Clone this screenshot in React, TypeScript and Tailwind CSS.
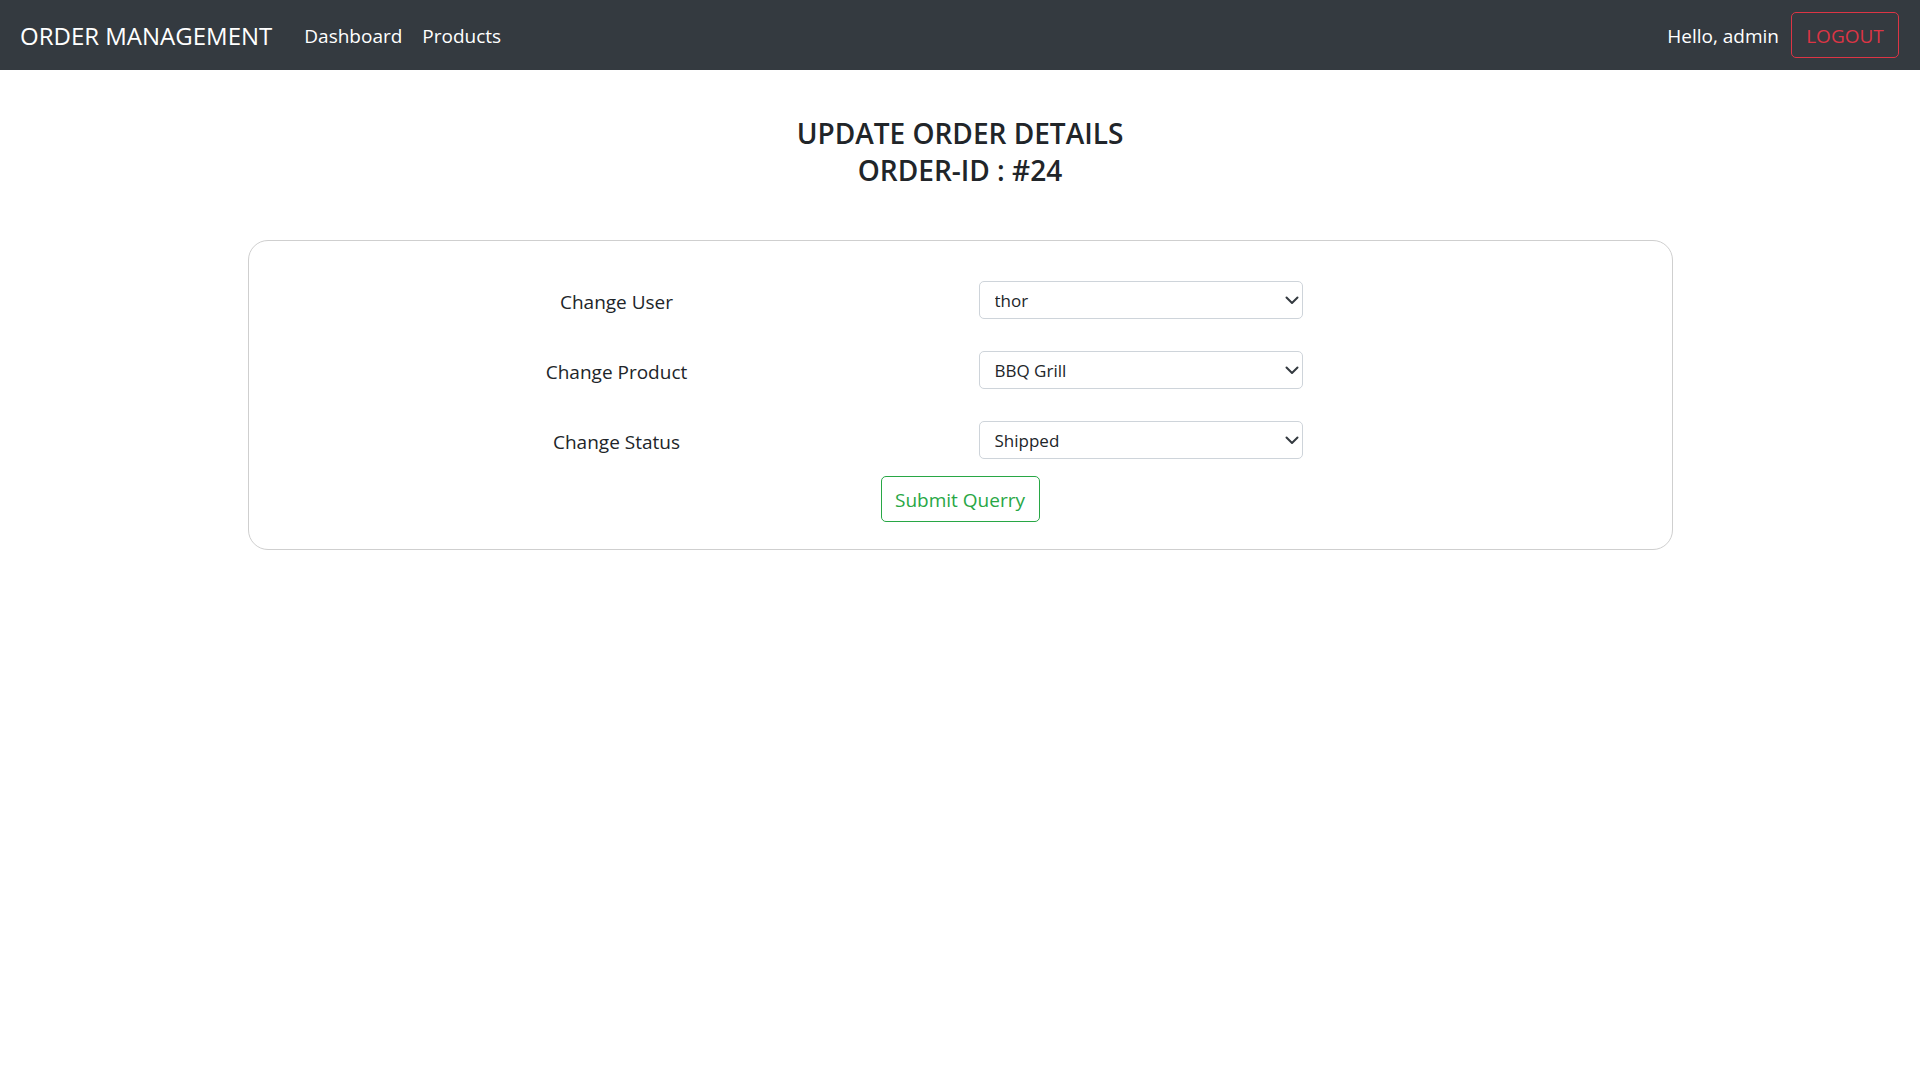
import React from "react";

const font = { fontFamily: '"Open Sans", "Noto Sans", Arial, sans-serif' };

function Chevron() {
  return (
    <svg
      className="pointer-events-none absolute right-[3px] top-1/2 -translate-y-1/2"
      width="16"
      height="16"
      viewBox="0 0 16 16"
    >
      <path
        d="m2.5 5.5 5.5 5.5 5.5-5.5"
        fill="none"
        stroke="#343a40"
        strokeWidth="2"
        strokeLinecap="round"
        strokeLinejoin="round"
      />
    </svg>
  );
}

function Field({ label, value, options }: { label: string; value: string; options: string[] }) {
  return (
    <div className="flex h-[38px] items-center">
      <label className="ml-[196px] w-[344px] pt-[4px] text-center text-[19px] text-[#212529]">{label}</label>
      <div className="relative ml-[190px] w-[324px]">
        <select
          defaultValue={value}
          className="h-[38px] w-full appearance-none rounded-[5px] border border-[#ced4da] bg-white pl-[15px] pr-[40px] pt-[2px] text-[17px] text-[#212529] outline-none"
          style={font}
        >
          {options.map((o) => (
            <option key={o}>{o}</option>
          ))}
        </select>
        <Chevron />
      </div>
    </div>
  );
}

export default function App() {
  return (
    <div className="min-h-screen bg-white" style={font}>
      <nav className="flex h-[70px] items-center justify-between bg-[#343a40] pl-[20px] pr-[21px]">
        <div className="flex items-center pt-[2px]">
          <span className="mr-[22px] text-[24px] text-white">ORDER MANAGEMENT</span>
          <a className="px-[10px] text-[19px] text-white">Dashboard</a>
          <a className="px-[10px] text-[19px] text-white">Products</a>
        </div>
        <div className="flex items-center gap-[12px]">
          <span className="pt-[2px] text-[19px] text-white">Hello, admin</span>
          <button className="h-[46px] w-[108px] rounded-[5px] border border-[#dc3545] pt-[2px] text-[19px] text-[#dc3545]">
            LOGOUT
          </button>
        </div>
      </nav>

      <h4 className="mt-[45px] text-center text-[28px] font-semibold leading-[37px] text-[#212529]">
        UPDATE ORDER DETAILS
        <br />
        ORDER-ID : #24
      </h4>

      <div className="mx-auto mt-[51px] w-[1425px] rounded-[20px] border border-[#cfcfcf] pb-[27px] pt-[40px]">
        <div className="flex flex-col gap-[32px]">
          <Field label="Change User" value="thor" options={["thor", "loki", "admin"]} />
          <Field label="Change Product" value="BBQ Grill" options={["BBQ Grill", "Lawn Mower"]} />
          <Field label="Change Status" value="Shipped" options={["Pending", "Shipped", "Delivered"]} />
        </div>
        <div className="mt-[17px] flex justify-center">
          <button className="h-[46px] w-[159px] rounded-[5px] border border-[#28a745] pt-[2px] text-[19px] text-[#28a745]">
            Submit Querry
          </button>
        </div>
      </div>
    </div>
  );
}
